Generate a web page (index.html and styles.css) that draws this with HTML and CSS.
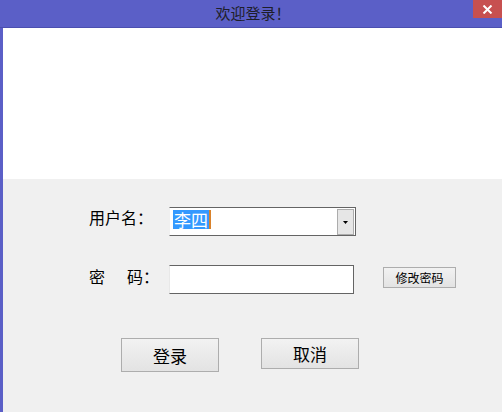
FILE: index.html
```html
<!DOCTYPE html>
<html lang="zh-CN">
<head>
<meta charset="utf-8">
<title>欢迎登录！</title>
<link rel="stylesheet" href="styles.css">
</head>
<body>
<div class="window">
  <div class="titlebar">
    <span class="title">欢迎登录！</span>
    <span class="close"><svg width="11" height="9" viewBox="0 0 11 9"><path d="M1.5 0.5 L9.5 8.5 M9.5 0.5 L1.5 8.5" stroke="#fff" stroke-width="2"/></svg></span>
  </div>
  <div class="client">
    <div class="banner"></div>
    <div class="form">
      <div class="row">
        <span class="label">用户名：</span>
        <div class="combo">
          <span class="sel">李四</span><span class="caret"></span>
          <span class="drop"><svg width="5" height="3" viewBox="0 0 5 3"><path d="M0 0 H5 L2.5 3 Z" fill="#000"/></svg></span>
        </div>
      </div>
      <div class="row row2">
        <span class="label"><span class="c1">密</span>码：</span>
        <div class="input"></div>
        <button class="small-btn">修改密码</button>
      </div>
      <div class="actions">
        <button class="btn btn-login">登录</button>
        <button class="btn btn-cancel">取消</button>
      </div>
    </div>
  </div>
</div>
</body>
</html>
```
FILE: styles.css
```css
* { box-sizing: border-box; }
html, body { margin: 0; padding: 0; }
body {
  width: 502px;
  height: 412px;
  overflow: hidden;
  font-family: "Noto Sans CJK SC", "Noto Sans", sans-serif;
  background: #f0f0f0;
}
.window {
  display: flex;
  flex-direction: column;
  height: 412px;
}
.titlebar {
  position: relative;
  height: 28px;
  background: #5b5fc7;
  border-bottom: 1px solid #4b4fb0;
  display: flex;
  justify-content: center;
  align-items: flex-start;
}
.title {
  font-size: 15px;
  line-height: 15px;
  padding-top: 5px;
  padding-left: 4px;
  color: #1e1e2a;
}
.close {
  position: absolute;
  top: 0;
  right: 0;
  width: 29px;
  height: 18px;
  background: #c75050;
  display: flex;
  align-items: center;
  justify-content: center;
}
.client {
  flex: 1;
  display: flex;
  flex-direction: column;
  border-left: 3px solid #5b5fc7;
}
.banner {
  height: 151px;
  background: #ffffff;
}
.form {
  flex: 1;
  background: #f0f0f0;
  padding: 28px 0 0 86px;
}
.row {
  display: flex;
  align-items: flex-start;
  height: 29px;
}
.row2 { margin-top: 29px; }
.label {
  width: 80px;
  font-size: 16px;
  line-height: 16px;
  padding-top: 2px;
  color: #000;
  white-space: nowrap;
}
.row2 .label { padding-top: 3px; }
.c1 { display: inline-block; width: 38px; }
.combo {
  width: 187px;
  height: 29px;
  border: 1px solid #646464;
  border-left-color: #f0f0f0;
  background: #fff;
  display: flex;
  align-items: flex-start;
  padding: 2px 1px 0 3px;
}
.sel {
  background: #3399ff;
  color: #fff;
  font-size: 17px;
  line-height: 19px;
  height: 19px;
  padding: 0 1px;
}
.caret {
  width: 2px;
  height: 19px;
  background: #d9822b;
}
.drop {
  margin-left: auto;
  width: 17px;
  height: 26px;
  margin-top: -1px;
  background: #e6e6e6;
  border: 1px solid #acacac;
  display: flex;
  align-items: center;
  justify-content: center;
}
.input {
  width: 185px;
  height: 29px;
  background: #fff;
  border: 1px solid #646464;
  border-left-color: #e8e8e8;
}
.small-btn {
  margin: 2px 0 0 29px;
  width: 73px;
  height: 21px;
  padding: 0;
  font-family: inherit;
  font-size: 12px;
  line-height: 12px;
  color: #000;
  background: linear-gradient(#f2f2f2, #e3e3e3);
  border: 1px solid #adadad;
}
.actions {
  display: flex;
  align-items: flex-start;
  gap: 42px;
  margin: 44px 0 0 32px;
}
.btn {
  width: 98px;
  padding: 0;
  font-family: inherit;
  font-size: 17px;
  line-height: 17px;
  color: #000;
  background: linear-gradient(#f2f2f2, #e3e3e3);
  border: 1px solid #adadad;
}
.btn-login { height: 34px; }
.btn-cancel { height: 31px; }
```
